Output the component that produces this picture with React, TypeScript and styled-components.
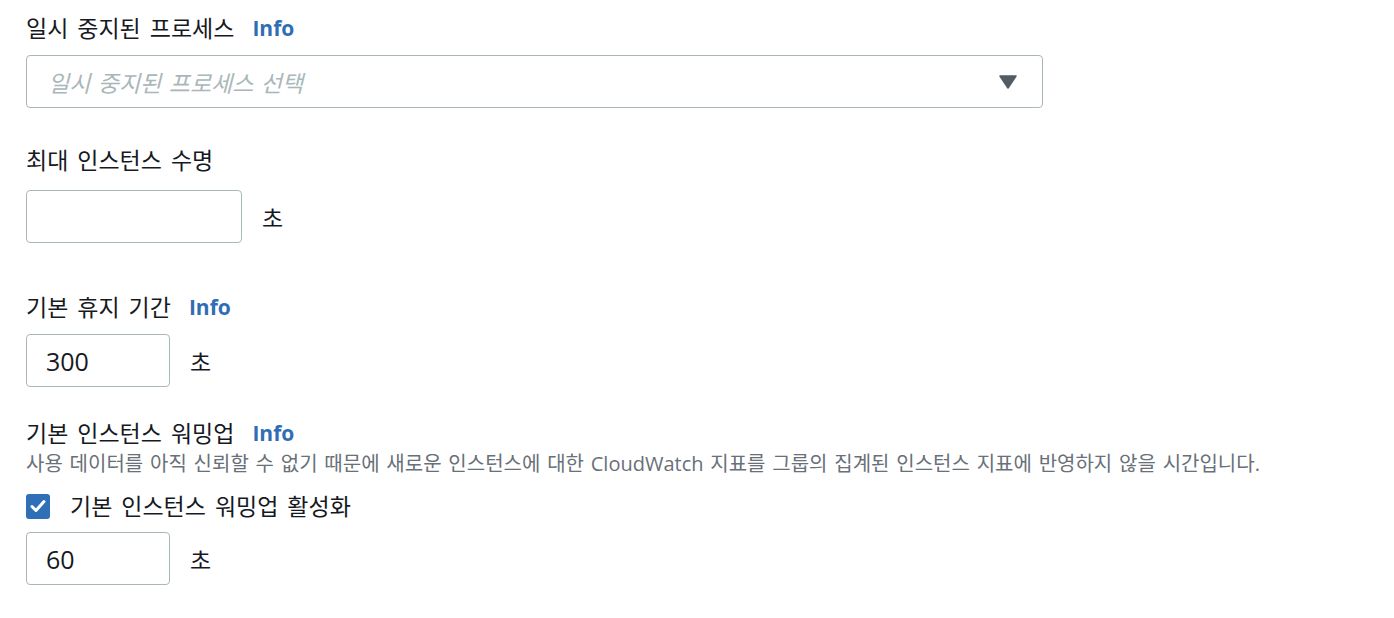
import React from "react";
import styled, { createGlobalStyle } from "styled-components";

const GlobalStyle = createGlobalStyle`
  body {
    margin: 0;
    background: #ffffff;
    font-family: "Open Sans", "Noto Sans CJK KR", sans-serif;
    color: #16191f;
  }
`;

const Page = styled.div`
  padding: 0 26px;
  display: flex;
  flex-direction: column;
`;

const Field = styled.div<{ $top: number }>`
  display: flex;
  flex-direction: column;
  margin-top: ${({ $top }) => $top}px;
`;

const LabelRow = styled.div<{ $gap: number }>`
  display: flex;
  align-items: center;
  height: 28px;
  margin-bottom: ${({ $gap }) => $gap}px;
`;

const Label = styled.span`
  font-size: 23px;
  line-height: 28px;
  word-spacing: 3px;
  color: #16191f;
  white-space: nowrap;
`;

const InfoLink = styled.a`
  margin-left: 18px;
  font-size: 21px;
  font-weight: 700;
  color: #2f6eb4;
  text-decoration: none;
  cursor: pointer;
`;

const Description = styled.div`
  font-size: 20px;
  line-height: 24px;
  word-spacing: 1.6px;
  color: #687078;
  margin-bottom: 17px;
  white-space: nowrap;
`;

const Select = styled.div`
  box-sizing: border-box;
  width: 1017px;
  height: 53px;
  border: 1px solid #aab7b8;
  border-radius: 4px;
  display: flex;
  align-items: center;
  justify-content: space-between;
  padding: 0 25px 0 21px;
`;

const Placeholder = styled.span`
  font-size: 23px;
  font-style: italic;
  word-spacing: 1.5px;
  color: #aab7b8;
`;

const InputRow = styled.div`
  display: flex;
  align-items: center;
  gap: 20px;
`;

const TextInput = styled.input<{ $width: number }>`
  box-sizing: border-box;
  width: ${({ $width }) => $width}px;
  height: 53px;
  border: 1px solid #aab7b8;
  border-radius: 4px;
  padding: 0 19px;
  font-family: "Open Sans", "Noto Sans CJK KR", sans-serif;
  font-size: 25px;
  color: #16191f;
  outline: none;
  background: #fff;
`;

const Unit = styled.span`
  font-size: 23px;
  color: #16191f;
`;

const CheckRow = styled.label`
  display: flex;
  align-items: center;
  gap: 20px;
  height: 26px;
  margin-bottom: 13px;
`;

const CheckBox = styled.span`
  width: 24px;
  height: 25px;
  border-radius: 3px;
  background: #2f6fb7;
  display: flex;
  align-items: center;
  justify-content: center;
`;

const Caret = () => (
  <svg width="18" height="14" viewBox="0 0 18 14">
    <path d="M1 1 H17 L9 13 Z" fill="#545b64" stroke="#545b64" strokeWidth="1.5" strokeLinejoin="round" />
  </svg>
);

const Check = () => (
  <svg width="18" height="18" viewBox="0 0 18 18">
    <path d="M3 9.5 L7 13.5 L15 4.5" fill="none" stroke="#fff" strokeWidth="3" strokeLinecap="round" strokeLinejoin="round" />
  </svg>
);

export default function App() {
  return (
    <>
      <GlobalStyle />
      <Page>
        <Field $top={14}>
          <LabelRow $gap={13}>
            <Label>일시 중지된 프로세스</Label>
            <InfoLink>Info</InfoLink>
          </LabelRow>
          <Select>
            <Placeholder>일시 중지된 프로세스 선택</Placeholder>
            <Caret />
          </Select>
        </Field>

        <Field $top={38}>
          <LabelRow $gap={16}>
            <Label>최대 인스턴스 수명</Label>
          </LabelRow>
          <InputRow>
            <TextInput $width={216} defaultValue="" />
            <Unit>초</Unit>
          </InputRow>
        </Field>

        <Field $top={50}>
          <LabelRow $gap={13}>
            <Label>기본 휴지 기간</Label>
            <InfoLink>Info</InfoLink>
          </LabelRow>
          <InputRow>
            <TextInput $width={144} defaultValue="300" />
            <Unit>초</Unit>
          </InputRow>
        </Field>

        <Field $top={32}>
          <LabelRow $gap={5}>
            <Label>기본 인스턴스 워밍업</Label>
            <InfoLink>Info</InfoLink>
          </LabelRow>
          <Description>
            사용 데이터를 아직 신뢰할 수 없기 때문에 새로운 인스턴스에 대한 CloudWatch 지표를 그룹의 집계된 인스턴스 지표에 반영하지 않을 시간입니다.
          </Description>
          <CheckRow>
            <CheckBox>
              <Check />
            </CheckBox>
            <Label>기본 인스턴스 워밍업 활성화</Label>
          </CheckRow>
          <InputRow>
            <TextInput $width={144} defaultValue="60" />
            <Unit>초</Unit>
          </InputRow>
        </Field>
      </Page>
    </>
  );
}
